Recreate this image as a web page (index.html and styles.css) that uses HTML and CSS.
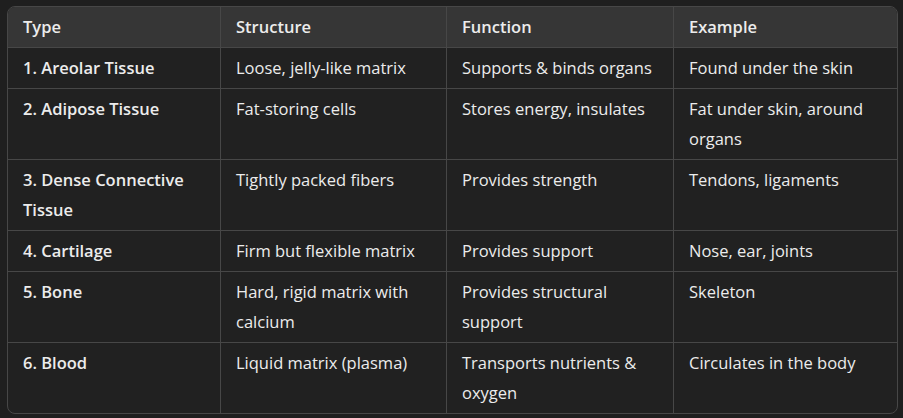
FILE: index.html
```html
<!DOCTYPE html>
<html>
<head>
<meta charset="utf-8">
<link rel="stylesheet" href="styles.css">
</head>
<body>
<div class="wrap">
<table class="tbl">
<colgroup><col class="c1"><col class="c2"><col class="c3"><col class="c4"></colgroup>
<thead>
<tr><th>Type</th><th>Structure</th><th>Function</th><th>Example</th></tr>
</thead>
<tbody>
<tr><td class="b">1. Areolar Tissue</td><td>Loose, jelly-like matrix</td><td>Supports &amp; binds organs</td><td>Found under the skin</td></tr>
<tr><td class="b">2. Adipose Tissue</td><td>Fat-storing cells</td><td>Stores energy, insulates</td><td>Fat under skin, around organs</td></tr>
<tr><td class="b">3. Dense Connective Tissue</td><td>Tightly packed fibers</td><td>Provides strength</td><td>Tendons, ligaments</td></tr>
<tr><td class="b">4. Cartilage</td><td>Firm but flexible matrix</td><td>Provides support</td><td>Nose, ear, joints</td></tr>
<tr><td class="b">5. Bone</td><td>Hard, rigid matrix with calcium</td><td>Provides structural support</td><td>Skeleton</td></tr>
<tr><td class="b">6. Blood</td><td>Liquid matrix (plasma)</td><td>Transports nutrients &amp; oxygen</td><td>Circulates in the body</td></tr>
</tbody>
</table>
</div>
</body>
</html>
```
FILE: styles.css
```css
html, body {
  margin: 0;
  padding: 0;
  background: #1f1f1f;
}
.wrap {
  padding: 6px 7px 0 7px;
}
.tbl {
  width: 889px;
  table-layout: fixed;
  border-collapse: separate;
  border-spacing: 0;
  border: 1px solid #474747;
  border-radius: 8px;
  overflow: hidden;
  font-family: "Open Sans", "Noto Sans", sans-serif;
  font-size: 16.5px;
  color: #ececec;
  background: #212121;
}
.c1 { width: 213px; }
.c2 { width: 226px; }
.c3 { width: 227px; }
.c4 { width: 223px; }
th, td {
  text-align: left;
  vertical-align: top;
  padding: 5px 15px;
  line-height: 30px;
  border-right: 1px solid #474747;
  border-bottom: 1px solid #474747;
}
th:last-child, td:last-child { border-right: none; }
tbody tr:last-child td { border-bottom: none; }
th {
  background: #363636;
  font-weight: 600;
}
td.b { font-weight: 600; }
```
